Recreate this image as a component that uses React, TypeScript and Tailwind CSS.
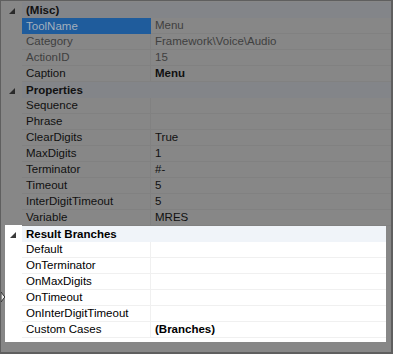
import React from "react";

type Row = {
    name: string;
    value?: string;
    kind?: "header" | "selected" | "readonly" | "normal";
    bold?: boolean;
};

const dimRows: Row[] = [
    { name: "(Misc)", kind: "header" },
    { name: "ToolName", value: "Menu", kind: "selected" },
    { name: "Category", value: "Framework\\Voice\\Audio", kind: "readonly" },
    { name: "ActionID", value: "15", kind: "readonly" },
    { name: "Caption", value: "Menu", bold: true },
    { name: "Properties", kind: "header" },
    { name: "Sequence", value: "" },
    { name: "Phrase", value: "" },
    { name: "ClearDigits", value: "True" },
    { name: "MaxDigits", value: "1" },
    { name: "Terminator", value: "#-" },
    { name: "Timeout", value: "5" },
    { name: "InterDigitTimeout", value: "5" },
    { name: "Variable", value: "MRES" },
];

const litRows: Row[] = [
    { name: "Default" },
    { name: "OnTerminator" },
    { name: "OnMaxDigits" },
    { name: "OnTimeout" },
    { name: "OnInterDigitTimeout" },
    { name: "Custom Cases", value: "(Branches)", bold: true },
];

const Arrow = ({ color }: { color: string }) => (
    <svg width="6" height="6" viewBox="0 0 6 6">
        <polygon points="6,0 6,6 0,6" fill={color} />
    </svg>
);

const DimRow = ({ row }: { row: Row }) => {
    if (row.kind === "header") {
        return (
            <div className="flex h-[16px]">
                <div className="w-[21px] flex items-center pl-[8px] pt-[1px]">
                    <Arrow color="#2a2a2a" />
                </div>
                <div className="flex-1 bg-[#838589] pl-[4px] leading-[16px] font-bold text-[#111]">
                    {row.name}
                </div>
            </div>
        );
    }
    const selected = row.kind === "selected";
    const readonly = row.kind === "readonly" || selected;
    return (
        <div className="flex h-[16px]">
            <div className="w-[21px]" />
            <div
                className={
                    selected
                        ? "w-[129px] bg-[#1f5c9c] text-[#a3afbc] pl-[4px] leading-[16px]"
                        : "w-[129px] border-b border-r border-[#818181] pl-[4px] leading-[15px] " +
                          (readonly ? "text-[#3f3f3f]" : "text-[#101010]")
                }
            >
                {row.name}
            </div>
            <div
                className={
                    "flex-1 border-b border-[#818181] pl-[4px] leading-[15px] " +
                    (readonly ? "text-[#3f3f3f]" : "text-[#101010]") +
                    (row.bold ? " font-bold" : "")
                }
            >
                {row.value}
            </div>
        </div>
    );
};

const LitRow = ({ row }: { row: Row }) => (
    <div className="flex h-[16px]">
        <div className="w-[17px]" />
        <div className="w-[129px] border-b border-r border-[#f0f0f0] pl-[4px] leading-[15px] text-black">
            {row.name}
        </div>
        <div
            className={
                "flex-1 border-b border-[#f0f0f0] pl-[4px] leading-[15px] text-black" +
                (row.bold ? " font-bold" : "")
            }
        >
            {row.value}
        </div>
    </div>
);

export default function App() {
    return (
        <div
            className="relative w-[393px] h-[354px] bg-[#878787] border-t border-l border-b-2 border-r-2 border-[#5f5f5f] overflow-hidden text-[11.5px]"
            style={{ fontFamily: '"Liberation Sans", Arial, sans-serif' }}
        >
            <div className="pt-[1px]">
                {dimRows.map((row, i) => (
                    <DimRow key={i} row={row} />
                ))}
            </div>

            <div className="ml-[4px] mt-[-1px] w-[381px] h-[117px] bg-white pt-[1px]">
                <div className="flex h-[16px]">
                    <div className="w-[17px] flex items-center pl-[5px] pt-[1px]">
                        <Arrow color="#3a3a3a" />
                    </div>
                    <div className="flex-1 bg-[#f0f4f9] pl-[4px] leading-[16px] font-bold text-black">
                        Result Branches
                    </div>
                </div>
                {litRows.map((row, i) => (
                    <LitRow key={i} row={row} />
                ))}
            </div>

            {/* cursor tip peeking in at the left edge */}
            <svg className="absolute left-0 top-[289px]" width="5" height="14" viewBox="0 0 5 14">
                <polygon points="0,2 3,6 4,7 3,8 0,12" fill="#e8e8e8" stroke="#333" strokeWidth="1" />
            </svg>
        </div>
    );
}
